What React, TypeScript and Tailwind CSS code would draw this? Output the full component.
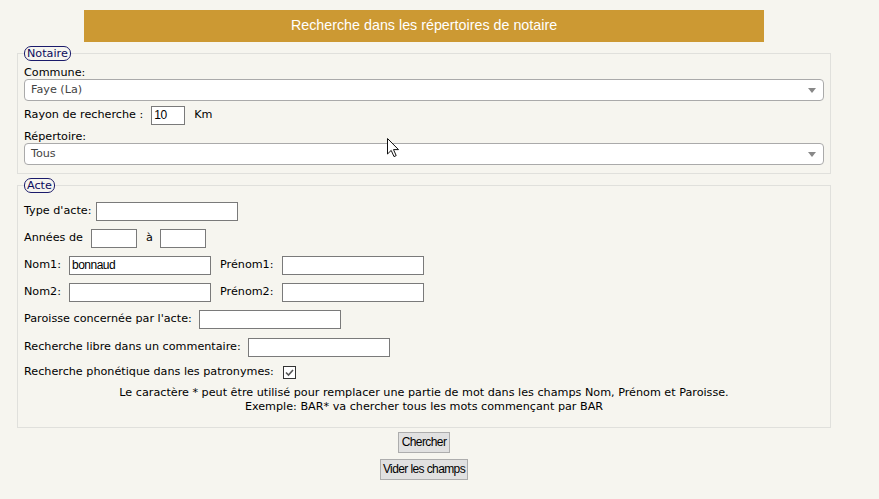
import React from "react";

const verdana = "font-['DejaVu_Sans',Verdana,sans-serif]";
const arial = "font-['Liberation_Sans',Arial,sans-serif]";

function TextBox({ w, value, className = "" }: { w: string; value?: string; className?: string }) {
  return (
    <div
      className={`${w} h-[19px] shrink-0 border border-[#7a7a7a] bg-white pl-[2px] ${arial} text-[12px] leading-[17px] tracking-[-0.5px] text-black ${className}`}
    >
      {value}
    </div>
  );
}

function Select({ value }: { value: string }) {
  return (
    <div className="flex h-[22px] items-center justify-between rounded-[4px] border border-[#aaaaaa] bg-white pl-[6px] pr-[6px]">
      <span className="text-[11.2px] text-[#444]">{value}</span>
      <svg width="8" height="5" viewBox="0 0 8 5" className="mr-[1px]">
        <path d="M0 0 L8 0 L4 5 Z" fill="#888" />
      </svg>
    </div>
  );
}

function Legend({ children }: { children: React.ReactNode }) {
  return (
    <legend className="rounded-[7px] border border-[#1b1b6b] px-[2px] text-[11.2px] leading-[13px] text-[#0a0a5c]">
      {children}
    </legend>
  );
}

export default function App() {
  return (
    <div className={`relative min-h-[499px] w-full bg-[#f6f5ef] pt-[10px] ${verdana} text-black`}>
      <div className="ml-[17px] w-[814px]">
        <div className={`mx-auto flex h-[32px] w-[680px] items-center justify-center bg-[#cc9933] ${arial} text-[14.3px] text-white`}>
          Recherche dans les répertoires de notaire
        </div>

        <fieldset className="mt-[4px] border border-[#e0e0dc] px-[6px] pb-[8px] pt-[5px]">
          <Legend>Notaire</Legend>
          <div className="text-[11.2px] leading-[13px]">Commune:</div>
          <Select value="Faye (La)" />
          <div className="mt-[5px] flex h-[19px] items-center text-[11.2px]">
            <span>Rayon de recherche :</span>
            <TextBox w="w-[34px] ml-[8px]" value="10" />
            <span className="ml-[9px]">Km</span>
          </div>
          <div className="mt-[5px] text-[11.2px] leading-[13px]">Répertoire:</div>
          <Select value="Tous" />
        </fieldset>

        <fieldset className="mt-[4px] border border-[#e0e0dc] px-[6px] pb-[13px] pt-[9px] text-[11.2px]">
          <Legend>Acte</Legend>
          <div className="flex flex-col gap-[8px]">
            <div className="flex h-[19px] items-center">
              <span>Type d'acte:</span>
              <TextBox w="w-[142px] ml-[5px]" />
            </div>
            <div className="flex h-[19px] items-center">
              <span>Années de</span>
              <TextBox w="w-[46px] ml-[8px]" />
              <span className="ml-[9px]">à</span>
              <TextBox w="w-[46px] ml-[7px]" />
            </div>
            <div className="flex h-[19px] items-center">
              <span>Nom1:</span>
              <TextBox w="w-[142px] ml-[8px]" value="bonnaud" />
              <span className="ml-[9px]">Prénom1:</span>
              <TextBox w="w-[142px] ml-[8px]" />
            </div>
            <div className="flex h-[19px] items-center">
              <span>Nom2:</span>
              <TextBox w="w-[142px] ml-[8px]" />
              <span className="ml-[9px]">Prénom2:</span>
              <TextBox w="w-[142px] ml-[8px]" />
            </div>
            <div className="flex h-[19px] items-center">
              <span>Paroisse concernée par l'acte:</span>
              <TextBox w="w-[142px] ml-[7px]" />
            </div>
            <div className="mt-[1px] flex h-[19px] items-center">
              <span>Recherche libre dans un commentaire:</span>
              <TextBox w="w-[142px] ml-[7px]" />
            </div>
            <div className="flex h-[15px] items-center">
              <span>Recherche phonétique dans les patronymes:</span>
              <span className="ml-[9px] flex h-[13px] w-[13px] items-center justify-center border border-[#333] bg-white">
                <svg width="11" height="11" viewBox="0 0 11 11">
                  <path d="M2 5.5 L4.5 8 L9 3" fill="none" stroke="#555" strokeWidth="1.6" />
                </svg>
              </span>
            </div>
          </div>
          <div className="mt-[6px] text-center leading-[14px]">
            <div>Le caractère * peut être utilisé pour remplacer une partie de mot dans les champs Nom, Prénom et Paroisse.</div>
            <div>Exemple: BAR* va chercher tous les mots commençant par BAR</div>
          </div>
        </fieldset>

        <div className={`flex flex-col items-center ${arial} text-[12px] tracking-[-0.6px]`}>
          <button className="mt-[4px] h-[21px] border border-[#adadad] bg-[#e1e1e1] px-[3px] leading-[19px] text-black">
            Chercher
          </button>
          <button className="mt-[6px] h-[21px] border border-[#adadad] bg-[#e1e1e1] px-[2px] leading-[19px] text-black">
            Vider les champs
          </button>
        </div>
      </div>

      <svg className="absolute left-[387px] top-[138px]" width="13" height="20" viewBox="0 0 13 20">
        <path d="M0.5 0.5 L0.5 16 L4.2 12.4 L7 18.6 L9.2 17.6 L6.5 11.6 L11.5 11.6 Z" fill="white" stroke="#111" strokeWidth="1" strokeLinejoin="miter" />
      </svg>
    </div>
  );
}
